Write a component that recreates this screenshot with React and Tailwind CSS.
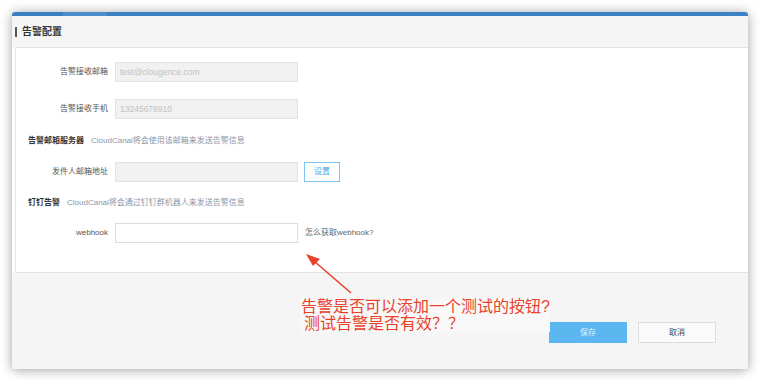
import React from 'react'

function Field({ label, children, className = '' }) {
  return (
    <div className={`flex items-center ${className}`}>
      <label className="w-[92px] shrink-0 text-right text-[8px] text-[#555]">{label}</label>
      <div className="ml-[7px] flex items-center">{children}</div>
    </div>
  )
}

function SectionTitle({ title, desc, className = '' }) {
  return (
    <div className={`flex h-[12px] items-center pl-[12px] ${className}`}>
      <span className="text-[8px] font-bold text-[#333]">{title}</span>
      <span className="ml-[7px] text-[8px] text-[#8c96a8]">{desc}</span>
    </div>
  )
}

export default function App() {
  return (
    <div className="relative h-[381px] w-[760px] overflow-hidden bg-white font-['Liberation_Sans','Noto_Sans_CJK_SC',sans-serif]">
      <div className="pl-[12px] pt-[12px]">
        <div className="flex h-[357px] w-[736px] flex-col overflow-hidden rounded-[3px] shadow-[0_1px_12px_rgba(0,0,0,0.38)]">
          <div className="flex h-[4px] shrink-0">
            <div className="w-[51px] bg-[#3a7fc0]" />
            <div className="w-[44px] bg-[#4a8dca]" />
            <div className="flex-1 bg-[#3a82c3]" />
          </div>
          <div className="flex h-[31px] shrink-0 items-center bg-[#f5f5f5] pl-[3px]">
            <span className="h-[10px] w-[2px] bg-[#555]" />
            <span className="ml-[5px] text-[10px] font-bold text-[#333]">告警配置</span>
          </div>
          <div className="ml-[3px] h-[226px] shrink-0 border border-r-0 border-[#e4e4e4] bg-white">
            <Field label="告警接收邮箱" className="mt-[14px]">
              <div className="flex h-[20px] w-[183px] items-center border border-[#e2e2e2] bg-[#f1f1f1] pl-[4px] text-[8.5px] text-[#c2c2c2]">
                test@clougence.com
              </div>
            </Field>
            <Field label="告警接收手机" className="mt-[17px]">
              <div className="flex h-[20px] w-[183px] items-center border border-[#e2e2e2] bg-[#f1f1f1] pl-[4px] text-[8.5px] text-[#c2c2c2]">
                13245678910
              </div>
            </Field>
            <SectionTitle title="告警邮箱服务器" desc="CloudCanal将会使用该邮箱来发送告警信息" className="mt-[16px]" />
            <Field label="发件人邮箱地址" className="mt-[15px]">
              <div className="h-[20px] w-[183px] border border-[#e2e2e2] bg-[#f1f1f1]" />
              <button
                type="button"
                className="ml-[6px] flex h-[20px] w-[36px] items-center justify-center border border-[#7cc3f2] bg-white text-[8px] text-[#4aa6e8]"
              >
                设置
              </button>
            </Field>
            <SectionTitle title="钉钉告警" desc="CloudCanal将会通过钉钉群机器人来发送告警信息" className="mt-[15px]" />
            <Field label="webhook" className="mt-[14px]">
              <div className="h-[20px] w-[183px] border border-[#dcdcdc] bg-white" />
              <span className="ml-[7px] text-[8px] text-[#666]">怎么获取webhook?</span>
            </Field>
          </div>
          <div className="flex flex-1 justify-end gap-[11px] bg-[#f5f5f5] pr-[32px] pt-[49px]">
            <button
              type="button"
              className="flex h-[21px] w-[78px] items-center justify-center bg-[#5cb6ef] text-[8px] text-[#e8f5fd]"
            >
              保存
            </button>
            <button
              type="button"
              className="flex h-[21px] w-[78px] items-center justify-center border border-[#dddddd] bg-[#fafafa] text-[8px] text-[#444]"
            >
              取消
            </button>
          </div>
        </div>
      </div>

      <svg className="pointer-events-none absolute left-0 top-0" width="760" height="381">
        <line x1="351" y1="293" x2="314" y2="261" stroke="#e8432d" strokeWidth="1.6" />
        <polygon points="306,254 320,259 313,266" fill="#e8432d" />
      </svg>

      <div className="absolute left-[300px] top-[298px] bg-[#f8f8f8] pl-[1px] text-[16px] leading-[17px] text-[#e8432d]">
        <div>告警是否可以添加一个测试的按钮?</div>
        <div className="pl-[3px]">测试告警是否有效？？</div>
      </div>
    </div>
  )
}
